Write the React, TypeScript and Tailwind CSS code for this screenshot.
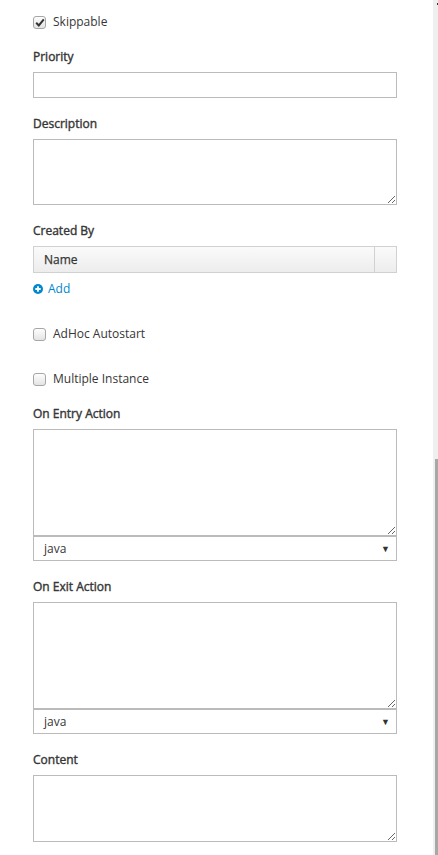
import React from 'react'

const font = { fontFamily: '"Open Sans", "Noto Sans", sans-serif' }

function Box({ checked }: { checked?: boolean }) {
  return (
    <span className="flex h-[13px] w-[13px] items-center justify-center rounded-[3px] border border-[#a6a6a6] bg-gradient-to-b from-[#fdfdfd] to-[#e4e4e4]">
      {checked && (
        <svg width="10" height="9" viewBox="0 0 10 9">
          <path d="M1.2 4.8 L3.8 7.4 L8.8 1.4" fill="none" stroke="#333" strokeWidth="2" />
        </svg>
      )}
    </span>
  )
}

function Check({ label, checked, className }: { label: string; checked?: boolean; className?: string }) {
  return (
    <div className={`flex h-[18px] items-center gap-[7px] text-[12px] text-[#363636] ${className || ''}`}>
      <Box checked={checked} />
      <span>{label}</span>
    </div>
  )
}

// semibold look: regular face with a thin stroke
function Label({ text, className }: { text: string; className?: string }) {
  return (
    <div className={`h-[16px] text-[12px] leading-[18px] text-[#363636] [-webkit-text-stroke:0.4px_#363636] ${className || ''}`}>
      {text}
    </div>
  )
}

function Area({ h }: { h: string }) {
  return <textarea className={`mt-[8px] block w-[364px] resize-y border border-[#bbb] bg-white outline-none ${h}`} />
}

function Select() {
  return (
    <div className="flex h-[25px] w-[364px] items-center justify-between border border-[#bbb] bg-white pl-[10px] pr-[6px] text-[12px] text-[#363636]">
      <span>java</span>
      <span className="text-[9px] text-[#333]">▼</span>
    </div>
  )
}

export default function App() {
  return (
    <div className="flex h-[855px] w-[438px] overflow-hidden bg-white" style={font}>
      <div className="flex-1 pl-[33px] pt-[13px]">
        <Check label="Skippable" checked />

        <Label text="Priority" className="mt-[17px]" />
        <input className="mt-[8px] block h-[26px] w-[364px] border border-[#bbb] bg-white outline-none" />

        <Label text="Description" className="mt-[17px]" />
        <Area h="h-[66px]" />

        <Label text="Created By" className="mt-[17px]" />
        <div className="mt-[8px] flex h-[27px] w-[364px] border border-[#d1d1d1] bg-gradient-to-b from-[#fafafa] to-[#ededed] text-[12px] text-[#363636]">
          <div className="flex flex-1 items-center border-r border-[#d1d1d1] pl-[10px] pt-[1px] [-webkit-text-stroke:0.25px_#363636]">Name</div>
          <div className="w-[21px]" />
        </div>
        <div className="mt-[8px] flex h-[16px] items-center gap-[5px] text-[12px] text-[#0088ce]">
          <svg width="10" height="10" viewBox="0 0 10 10">
            <circle cx="5" cy="5" r="5" fill="#0088ce" />
            <path d="M5 2.3 V7.7 M2.3 5 H7.7" stroke="#fff" strokeWidth="1.8" />
          </svg>
          <span>Add</span>
        </div>

        <Check label="AdHoc Autostart" className="mt-[28px]" />
        <Check label="Multiple Instance" className="mt-[27px]" />

        <Label text="On Entry Action" className="mt-[17px]" />
        <Area h="h-[107px]" />
        <Select />

        <Label text="On Exit Action" className="mt-[17px]" />
        <Area h="h-[107px]" />
        <Select />

        <Label text="Content" className="mt-[17px]" />
        <Area h="h-[67px]" />
      </div>

      {/* scrollbar */}
      <div className="relative w-[5px] bg-[#efefef]">
        <div className="absolute right-[0px] top-[3px] h-[2px] w-[1px] bg-[#333]" />
        <div className="absolute bottom-0 right-0 top-[459px] w-[3px] bg-[#a8a8a8]" />
      </div>
    </div>
  )
}
